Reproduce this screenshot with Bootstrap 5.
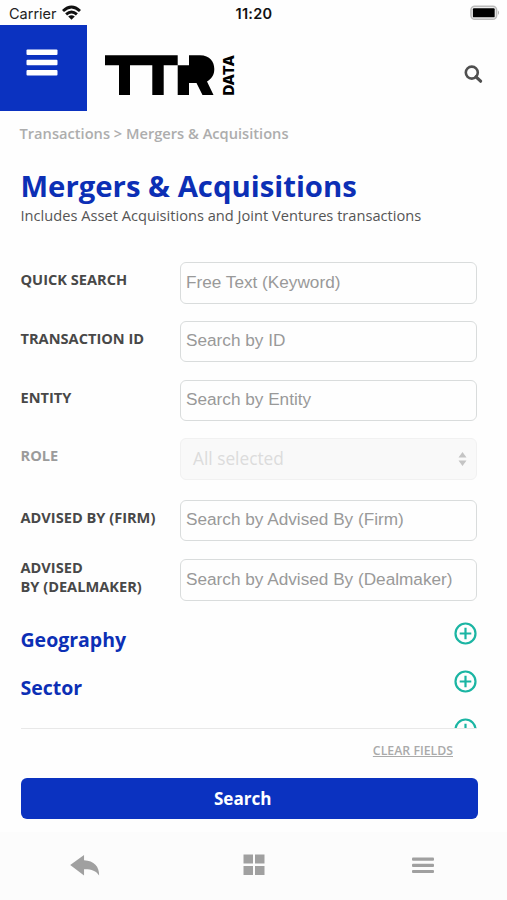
<!DOCTYPE html>
<html lang="en">
<head>
<meta charset="utf-8">
<meta name="viewport" content="width=device-width, initial-scale=1">
<title>TTR Data - Mergers &amp; Acquisitions</title>
<link href="https://cdn.jsdelivr.net/npm/bootstrap@5.3.0/dist/css/bootstrap.min.css" rel="stylesheet">
<style>
body{font-family:"Open Sans",sans-serif;background:#fefefe;color:#4a4a4a;height:900px;overflow:hidden}
.app{height:900px}
.status{height:25px;font-family:Inter,sans-serif;font-size:14.5px;line-height:27px;color:#222;padding:0 7px 0 9px}
.status svg{margin-top:5px}
.status .clock{font-weight:600;letter-spacing:.3px;color:#111;margin-left:-1px}
.status .side{width:90px}
.top-bar{height:86px}
.menu-btn{width:87px;height:86px;background:#0b32c0;border:0;border-radius:0;padding:0}
.menu-btn svg{margin:24.4px 0 0 -3px}
.logo{margin:28px 0 0 18px}
.find-btn{margin:40px 24px 0 0}
.trail{font-size:14.65px;line-height:20px;font-weight:600;color:#adadad;padding:12px 0 0 19.5px}
.page-title{font-size:29.3px;line-height:36px;font-weight:700;color:#0c2fb5;margin:24.6px 0 0}
.page-sub{font-size:14.65px;line-height:20px;margin:1.4px 0 0;color:#555}
.content-area{padding:0 30px 0 20.5px}
.fields{margin-top:37.4px}
.field{height:58.6px}
.field.role-row{height:61.5px}
.field.firm-row{height:59.5px}
.field label{width:159.5px;font-size:14.6px;line-height:18.5px;font-weight:700;color:#484848;padding-top:8px;flex:none}
.field.role-row label{color:#9b9b9b}
.field.deal-row label{margin-top:-1px;padding-top:0}
.field .form-control{height:41.5px;border:1.5px solid #d9dcdc;border-radius:6px;padding:0 5px 1.5px;font:17.2px "Liberation Sans",Arial,sans-serif;background:#fefefe}
.field .form-control::placeholder{color:#999;opacity:1}
.field .pick{height:41.5px;border:1.5px solid #f1f1f1;border-radius:6px;background:#f9f9f9;color:#dcdcdc;font-size:17.3px;padding:1px 9px 0 12px}
.results{height:111.5px;padding-top:5px;overflow:hidden;border-bottom:1.5px solid #e8e8e8;margin-right:.5px}
.group-row{height:48.1px;font-size:19.5px;line-height:27px;font-weight:700;color:#0c2fb5}
.group-row span{padding-top:3.5px}
.group-row svg{margin-top:-1px;flex:none}
.clear-link{font-size:12.3px;line-height:18px;font-weight:600;color:#aaa;margin:12.5px 24px 0 0}
.submit-btn{height:41.5px;margin:18px -1px 0 0;background:#0b32c0;border:0;border-radius:6px;color:#fff;font-size:17.1px;font-weight:700;line-height:40px;padding:0 13px 0 0}
.bottom-nav{background:#fcfcfc;height:68px;padding-bottom:5px}
</style>
</head>
<body>
<div class="app d-flex flex-column">
  <div class="status d-flex justify-content-between">
    <div class="side d-flex"><span>Carrier</span>
      <svg class="ms-1" width="21" height="15" viewBox="0 0 21 15"><g fill="none" stroke="#111" stroke-width="2.900"><path d="M2 6Q10.500-2 19 6"/><path d="M5.100 9.400Q10.500 4.600 15.900 9.400"/></g><path d="M7.200 11.600Q10.500 9 13.800 11.600L10.500 14.800Z" fill="#111"/></svg>
    </div>
    <span class="clock">11:20</span>
    <div class="side d-flex justify-content-end">
      <svg width="30" height="16" viewBox="0 0 31 16"><rect x="1" y="1" width="26.500" height="13.500" rx="4" fill="#eee" stroke="#bbb" stroke-width="1.600"/><rect x="3" y="3.200" width="22.500" height="9.300" rx="1" fill="#000"/><path d="M29 5.500q2 2.200 0 4.500z" fill="#aaa"/></svg>
    </div>
  </div>
  <header class="top-bar d-flex align-items-start">
    <button class="menu-btn btn d-flex justify-content-center align-items-start" aria-label="Menu"><svg width="32" height="27" viewBox="0 0 32 27"><g fill="#fff"><rect x=".5" y=".5" width="31" height="5.600" rx="1"/><rect x=".5" y="10.700" width="31" height="5.600" rx="1"/><rect x=".5" y="20.900" width="31" height="5.600" rx="1"/></g></svg></button>
    <svg class="logo" width="132" height="44" viewBox="0 0 132 44" role="img"><path d="M0 2.300H72.700V12.300H84V2.300H95C105 2.300 109.300 9 109.300 16C109.300 22 106.500 26 102 28.500L108.500 42H97.500L91.500 30H84V42H72.700V12.300H58.700V42H47.300V12.300H25V42H14V12.300H0Z"/><text transform="translate(128.800 42.500) rotate(-90)" font-family="Inter,sans-serif" font-size="15.200" font-weight="800" textLength="40.500" lengthAdjust="spacingAndGlyphs">DATA</text></svg>
    <svg class="find-btn ms-auto" width="19" height="19" viewBox="0 0 19 19" fill="none" stroke="#505050"><circle cx="7.800" cy="7.600" r="6" stroke-width="2.600"/><path d="M12 11.800L16.600 16.200" stroke-width="3.200" stroke-linecap="round"/></svg>
  </header>
  <div class="trail">Transactions &gt; Mergers &amp; Acquisitions</div>
  <main class="content-area">
    <h1 class="page-title">Mergers &amp; Acquisitions</h1>
    <p class="page-sub">Includes Asset Acquisitions and Joint Ventures transactions</p>
    <form class="fields">
      <div class="field d-flex"><label for="q">QUICK SEARCH</label><input id="q" class="form-control" placeholder="Free Text (Keyword)"></div>
      <div class="field d-flex"><label for="tid">TRANSACTION ID</label><input id="tid" class="form-control" placeholder="Search by ID"></div>
      <div class="field d-flex"><label for="ent">ENTITY</label><input id="ent" class="form-control" placeholder="Search by Entity"></div>
      <div class="field d-flex role-row"><label>ROLE</label><div class="pick flex-grow-1 d-flex align-items-center justify-content-between"><span>All selected</span><svg width="9" height="14" viewBox="0 0 9 14" fill="#c4c4c4"><path d="M.5 5.500L4.500 0L8.500 5.500ZM.5 8.500L4.500 14L8.500 8.500Z"/></svg></div></div>
      <div class="field d-flex firm-row"><label for="firm">ADVISED BY (FIRM)</label><input id="firm" class="form-control" placeholder="Search by Advised By (Firm)"></div>
      <div class="field d-flex deal-row"><label for="dm">ADVISED<br>BY (DEALMAKER)</label><input id="dm" class="form-control" placeholder="Search by Advised By (Dealmaker)"></div>
    </form>
    <div class="results">
      <div class="group-row d-flex justify-content-between"><span>Geography</span><svg width="23" height="23" viewBox="0 0 23 23" fill="none" stroke="#1bb5a3" stroke-width="2.200"><circle cx="11.500" cy="11.500" r="10"/><path d="M11.500 5.700V17.300M5.700 11.500H17.300"/></svg></div>
      <div class="group-row d-flex justify-content-between"><span>Sector</span><svg width="23" height="23" viewBox="0 0 23 23" fill="none" stroke="#1bb5a3" stroke-width="2.200"><circle cx="11.500" cy="11.500" r="10"/><path d="M11.500 5.700V17.300M5.700 11.500H17.300"/></svg></div>
      <div class="group-row d-flex justify-content-between"><span>Deal Info</span><svg width="23" height="23" viewBox="0 0 23 23" fill="none" stroke="#1bb5a3" stroke-width="2.200"><circle cx="11.500" cy="11.500" r="10"/><path d="M11.500 5.700V17.300M5.700 11.500H17.300"/></svg></div>
    </div>
    <div class="d-flex justify-content-end"><a href="#" class="clear-link">CLEAR FIELDS</a></div>
    <div class="d-grid"><button class="submit-btn btn">Search</button></div>
  </main>
  <nav class="bottom-nav mt-auto row g-0 text-center align-items-center">
    <div class="col"><svg width="30" height="21" viewBox="0 0 31 22" fill="#a0a0a0"><path d="M0 10.500L14.500 0V5.500C25 6 30.500 12 30.300 21.500C27 16.500 22 14.800 14.500 15V21.500Z"/></svg></div>
    <div class="col"><svg width="22" height="22" viewBox="0 0 22 22" fill="#a0a0a0"><path d="M.5.5H10V9.500H.5ZM12 .5H21.500V9.500H12ZM.5 12H10V21H.5ZM12 12H21.500V21H12Z"/></svg></div>
    <div class="col"><svg width="22" height="17" viewBox="0 0 22 17" fill="#a0a0a0"><rect y=".5" width="22" height="3.200" rx="1"/><rect y="6.700" width="22" height="3.200" rx="1"/><rect y="12.900" width="22" height="3.200" rx="1"/></svg></div>
  </nav>
</div>
<script src="https://cdn.jsdelivr.net/npm/bootstrap@5.3.0/dist/js/bootstrap.bundle.min.js"></script>
</body>
</html>
